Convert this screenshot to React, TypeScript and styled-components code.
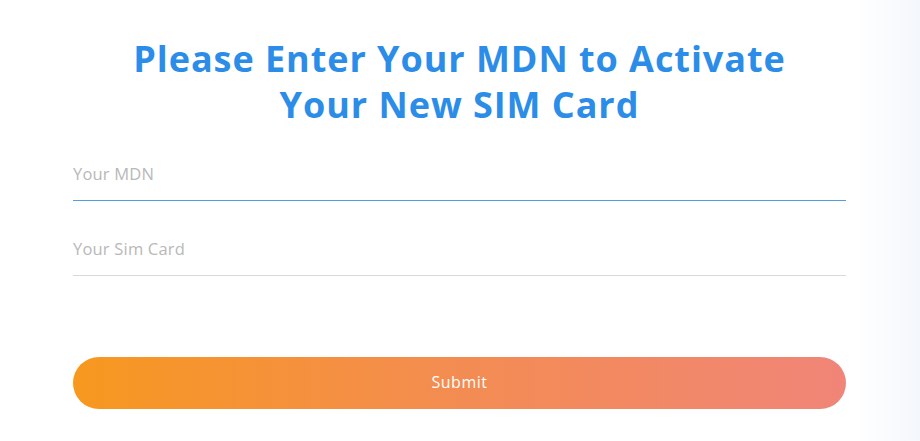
import styled, { createGlobalStyle } from 'styled-components'

const Global = createGlobalStyle`
  html, body {
    margin: 0;
    padding: 0;
    height: 100%;
  }
  body {
    font-family: 'Open Sans', 'Liberation Sans', sans-serif;
    background: linear-gradient(90deg, #ffffff 0%, #ffffff 93%, #f4f7fc 100%);
  }
`

const Page = styled.div`
  display: flex;
  justify-content: center;
  width: 100%;
  min-height: 441px;
  box-sizing: border-box;
  padding: 36px 1px 0 0;
`

const Form = styled.form`
  display: flex;
  flex-direction: column;
  width: 773px;
`

const Title = styled.h1`
  margin: 0 0 23px;
  text-align: center;
  font-family: 'Open Sans', sans-serif;
  font-weight: 700;
  font-size: 36px;
  line-height: 46px;
  letter-spacing: 0.95px;
  color: #2b8de7;
`

const Input = styled.input<{ $active?: boolean }>`
  appearance: none;
  -webkit-appearance: none;
  display: block;
  box-sizing: border-box;
  width: 100%;
  height: 50px;
  margin: 0;
  padding: 0 0 4px;
  border: 0 solid transparent;
  border-bottom: 1px solid ${(p) => (p.$active ? '#4f9fe4' : '#d9d9d9')};
  border-radius: 0;
  background: transparent;
  box-shadow: none;
  outline: none;
  font-family: 'Open Sans', sans-serif;
  font-size: 16.5px;
  letter-spacing: 0.2px;
  color: #333;
  caret-color: #111;
  & + & {
    margin-top: 25px;
  }
  &:focus {
    border-bottom-color: #4f9fe4;
  }
  &::placeholder {
    color: #b8b8b8;
  }
`

const Submit = styled.button`
  margin-top: 81px;
  height: 52px;
  width: 100%;
  padding: 0 0 3px;
  border: none;
  border-radius: 26px;
  background: linear-gradient(90deg, #f7981f 0%, #f38c52 50%, #f08578 100%);
  color: #fff;
  font-family: 'Open Sans', sans-serif;
  font-size: 16px;
  letter-spacing: 0.5px;
  cursor: pointer;
`

export default function App() {
  return (
    <>
      <Global />
      <Page>
        <Form onSubmit={(e) => e.preventDefault()}>
          <Title>
            Please Enter Your MDN to Activate
            <br />
            Your New SIM Card
          </Title>
          <Input $active autoFocus placeholder="Your MDN" />
          <Input placeholder="Your Sim Card" />
          <Submit type="submit">Submit</Submit>
        </Form>
      </Page>
    </>
  )
}
